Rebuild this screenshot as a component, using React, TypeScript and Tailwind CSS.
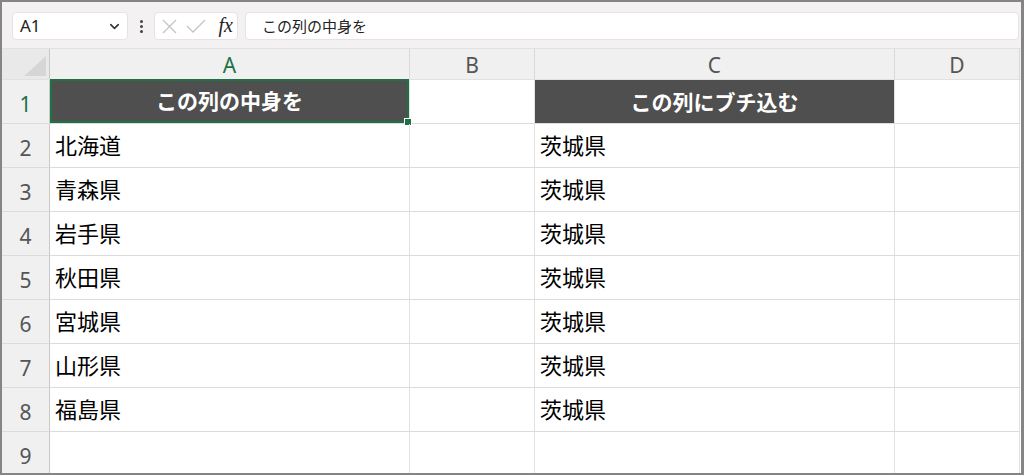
import { ChevronDown } from 'lucide-react';

const COLS = ['A', 'B', 'C', 'D'];
const LEFT = ['北海道', '青森県', '岩手県', '秋田県', '宮城県', '山形県', '福島県'];

const jp = { fontFamily: '"Noto Sans CJK JP", "Noto Sans", sans-serif' };
const ui = { fontFamily: '"Noto Sans", "Liberation Sans", sans-serif' };

function FormulaBar() {
  return (
    <div className="h-[46px] bg-[#f3f1f2] flex items-start pt-[10px] pl-[10px] pr-[2px]" style={ui}>
      <div className="w-[116px] h-[28px] bg-white rounded-[4px] border border-[#e6e3e5] flex items-center justify-between pl-[7px] pr-[5px]">
        <span className="text-[17px] text-[#222]">A1</span>
        <ChevronDown size={15} strokeWidth={2.5} className="text-[#333]" />
      </div>
      <div className="w-[26px] h-[28px] flex flex-col items-center justify-center gap-[2px]">
        <span className="w-[3px] h-[3px] rounded-full bg-[#444]" />
        <span className="w-[3px] h-[3px] rounded-full bg-[#444]" />
        <span className="w-[3px] h-[3px] rounded-full bg-[#444]" />
      </div>
      <div className="w-[84px] h-[28px] bg-white rounded-[4px] border border-[#e6e3e5] flex items-center pl-[6px] pr-[4px] gap-[8px]">
        <svg width="17" height="17" viewBox="0 0 17 17" fill="none" stroke="#c4c4c4" strokeWidth="1.3">
          <path d="M2 2 L15 15 M15 2 L2 15" />
        </svg>
        <svg width="20" height="15" viewBox="0 0 20 15" fill="none" stroke="#c4c4c4" strokeWidth="1.3">
          <path d="M1 7 L7 13 L19 1" />
        </svg>
        <span className="text-[20px] italic text-[#222] leading-none ml-auto pb-[2px]" style={{ fontFamily: '"Liberation Serif", serif' }}>
          fx
        </span>
      </div>
      <div className="ml-[7px] flex-1 h-[28px] bg-white rounded-[4px] border border-[#e6e3e5] flex items-center pl-[16px]">
        <span className="text-[15px] text-[#222]" style={jp}>この列の中身を</span>
      </div>
    </div>
  );
}

function HeaderRow() {
  return (
    <div className="flex h-[32px] bg-[#f0f0f0] border-t border-[#e2e0e1] border-b border-[#cfcfcf]">
      <div className="w-[48px] border-r border-[#c9c9c9] bg-[#e9e9e9] flex items-end justify-end pr-[3px] pb-[3px]">
        <svg width="22" height="20" viewBox="0 0 22 20">
          <path d="M22 0 L22 20 L0 20 Z" fill="#d6d6d6" />
        </svg>
      </div>
      {COLS.map((c, i) => (
        <div
          key={c}
          className={`${i % 2 === 0 ? 'w-[360px]' : 'w-[125px]'} border-r border-[#dadada] flex items-center justify-center pt-[3px] text-[21px] ${
            c === 'A' ? 'text-[#1e7145]' : 'text-[#555]'
          }`}
          style={ui}
        >
          {c}
        </div>
      ))}
    </div>
  );
}

function Row({ n, a, c, head }: { n: number; a?: string; c?: string; head?: boolean }) {
  return (
    <div className="flex h-[44px]">
      <div
        className={`w-[48px] bg-[#f0f0f0] border-r border-[#c9c9c9] border-b border-b-[#dcdcdc] flex items-center justify-center pt-[6px] text-[21px] ${
          head ? 'text-[#1e7145]' : 'text-[#555]'
        }`}
        style={ui}
      >
        {n}
      </div>
      <div className="relative w-[360px] border-r border-[#e1e1e1] border-b border-b-[#dcdcdc]">
        {head ? (
          <div className="absolute inset-0 -top-[1px] border-2 border-[#1e7145] bg-[#4f4f4f] flex items-center justify-center">
            <span className="text-white font-bold text-[21px]" style={jp}>この列の中身を</span>
            <span className="absolute -right-[5px] -bottom-[5px] w-[8px] h-[8px] bg-[#1e7145] border border-white" />
          </div>
        ) : (
          <div className="h-full flex items-center pl-[5px] pb-[3px] text-[22px] text-black" style={jp}>
            {a}
          </div>
        )}
      </div>
      <div className="w-[125px] border-r border-[#e1e1e1] border-b border-b-[#dcdcdc]" />
      <div
        className={`w-[360px] border-r border-[#e1e1e1] border-b border-b-[#dcdcdc] ${head ? 'bg-[#4f4f4f]' : ''}`}
      >
        {head ? (
          <div className="h-full flex items-center justify-center">
            <span className="text-white font-bold text-[21px]" style={jp}>この列にブチ込む</span>
          </div>
        ) : (
          c && (
            <div className="h-full flex items-center pl-[5px] pb-[3px] text-[22px] text-black" style={jp}>
              {c}
            </div>
          )
        )}
      </div>
      <div className="w-[125px] border-r border-[#e1e1e1] border-b border-b-[#dcdcdc]" />
    </div>
  );
}

export default function App() {
  return (
    <div className="w-[1024px] h-[475px] bg-white overflow-hidden border-2 border-[#858585] border-r-[3px]">
      <FormulaBar />
      <HeaderRow />
      <Row n={1} head />
      {LEFT.map((p, i) => (
        <Row key={p} n={i + 2} a={p} c="茨城県" />
      ))}
      <Row n={9} />
    </div>
  );
}
